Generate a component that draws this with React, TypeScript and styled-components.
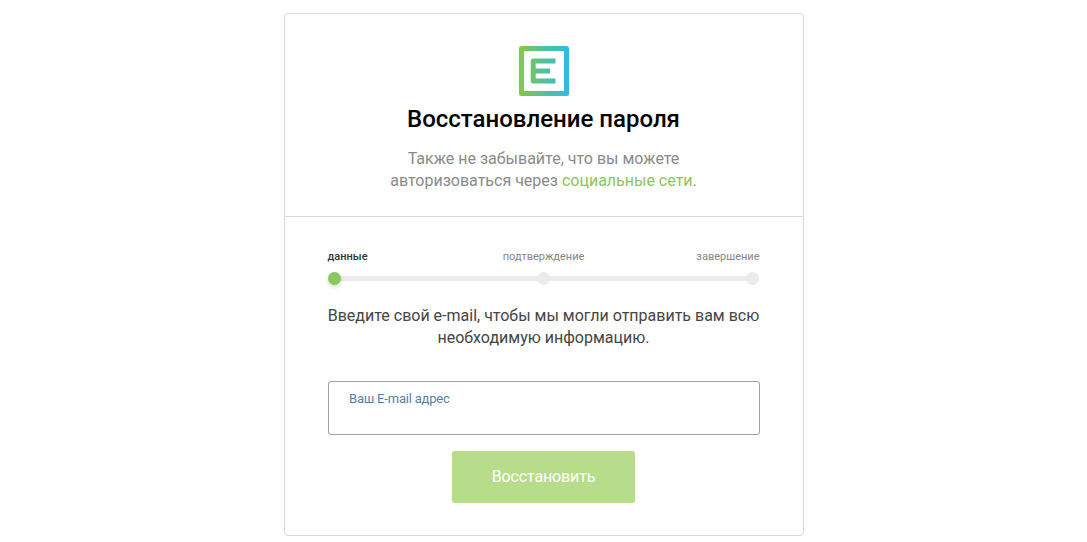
import styled, { createGlobalStyle, css } from 'styled-components';

const theme = {
  color: {
    primary: '#8bc460',
    button: '#b8dd8a',
    border: '#d5d9db',
    track: '#ebebeb',
  },
};

const steps = ['данные', 'подтверждение', 'завершение'];

const Logo = () => (
  <LogoIcon width="50" height="50" viewBox="0 0 50 50" fill="none">
    <defs>
      <linearGradient id="logo" gradientUnits="userSpaceOnUse" x1="0" y1="0" x2="50" y2="0">
        <stop offset="0" stopColor="#86c944" />
        <stop offset="0.5" stopColor="#55c09a" />
        <stop offset="1" stopColor="#2cbbe4" />
      </linearGradient>
    </defs>
    <rect x="2.5" y="2.5" width="45" height="45" stroke="url(#logo)" strokeWidth="5" strokeLinejoin="round" />
    <path d="M36.5 14.9H14.2V35H36.5M14.2 25H31" stroke="url(#logo)" strokeWidth="5" strokeLinejoin="round" />
  </LogoIcon>
);

export default function App() {
  return (
    <Page>
      <GlobalStyle />
      <Card>
        <Header>
          <Logo />
          <Title>Восстановление пароля</Title>
          <SubTitle>
            Также не забывайте, что вы можете <br />
            авторизоваться через <SocialLink href="#">социальные сети</SocialLink>.
          </SubTitle>
        </Header>
        <Form onSubmit={(e) => e.preventDefault()}>
          <StepNames>
            {steps.map((step, i) => (
              <StepName key={step} $active={i === 0}>{step}</StepName>
            ))}
          </StepNames>
          <Track>
            {steps.map((step, i) => (
              <Dot key={step} $active={i === 0} />
            ))}
          </Track>
          <Description>
            Введите свой e-mail, чтобы мы могли отправить вам всю <br />
            необходимую информацию.
          </Description>
          <Field>
            <FieldName>Ваш E-mail адрес</FieldName>
            <Input type="email" />
          </Field>
          <SubmitButton type="submit">Восстановить</SubmitButton>
        </Form>
      </Card>
    </Page>
  );
}

const GlobalStyle = createGlobalStyle`
  * {
    box-sizing: border-box;
  }

  body {
    margin: 0;
    background: #fff;
    font-family: Roboto, 'Liberation Sans', sans-serif;
  }
`

const Page = styled.main`
  display: flex;
  justify-content: center;
  padding: 13px 0 6px;
`

const Card = styled.section`
  width: 520px;
  height: 523px;
  border: 1px solid ${theme.color.border};
  border-radius: 4px;
`

const Header = styled.header`
  display: flex;
  flex-direction: column;
  align-items: center;
  height: 203px;
  padding-top: 32px;
  border-bottom: 1px solid ${theme.color.border};
`

const LogoIcon = styled.svg`
  flex: none;
`

const Title = styled.h1`
  margin: 7px 0 0;
  color: #000;
  font-size: 24px;
  font-weight: 500;
  line-height: 32px;
`

const SubTitle = styled.p`
  margin: 13px 0 0;
  color: #8a8a8a;
  font-size: 16px;
  line-height: 22px;
  text-align: center;
`

const SocialLink = styled.a`
  color: ${theme.color.primary};
  text-decoration: none;
`

const Form = styled.form`
  display: flex;
  flex-direction: column;
  align-items: center;
  padding: 32px 43px 0;
`

const StepNames = styled.div`
  display: grid;
  grid-template-columns: 1fr auto 1fr;
  width: 100%;
  line-height: 16px;
`

const StepName = styled.span<{ $active: boolean }>`
  color: ${({ $active }) => ($active ? '#333' : '#858585')};
  font-size: 11px;
  font-weight: ${({ $active }) => ($active ? 500 : 400)};

  &:last-child {
    text-align: right;
  }
`

const Track = styled.div`
  display: flex;
  align-items: center;
  justify-content: space-between;
  width: 100%;
  height: 13px;
  margin-top: 7px;
  padding-right: 1px;
  background: linear-gradient(${theme.color.track}, ${theme.color.track}) center / calc(100% - 12px) 5px no-repeat;
`

const Dot = styled.span<{ $active: boolean }>`
  width: 13px;
  height: 13px;
  border-radius: 50%;
  background: ${theme.color.track};

  ${({ $active }) => $active && css`
    background: #8dc663;
    box-shadow: 0 2px 4px rgba(141, 198, 99, 0.45);
  `}
`

const Description = styled.p`
  margin: 20px 0 0;
  color: #454545;
  font-size: 16px;
  line-height: 22px;
  text-align: center;
  white-space: nowrap;
`

const Field = styled.label`
  display: flex;
  flex-direction: column;
  width: 100%;
  height: 54px;
  margin-top: 32px;
  padding: 9px 20px 0 20.5px;
  border: 1px solid #a0a0a4;
  border-radius: 3px;
`

const FieldName = styled.span`
  color: #5580a8;
  font-size: 13px;
  letter-spacing: -0.2px;
  line-height: 16px;
`

const Input = styled.input`
  width: 100%;
  height: 22px;
  padding: 0;
  border: 0;
  outline: 0;
  background: transparent;
  font: inherit;
  font-size: 16px;
`

const SubmitButton = styled.button`
  width: 183px;
  height: 52px;
  margin-top: 16px;
  padding: 0 0 1px;
  border: 0;
  border-radius: 3px;
  background: ${theme.color.button};
  color: #fff;
  font-family: inherit;
  font-size: 16px;
  letter-spacing: -0.15px;
`
